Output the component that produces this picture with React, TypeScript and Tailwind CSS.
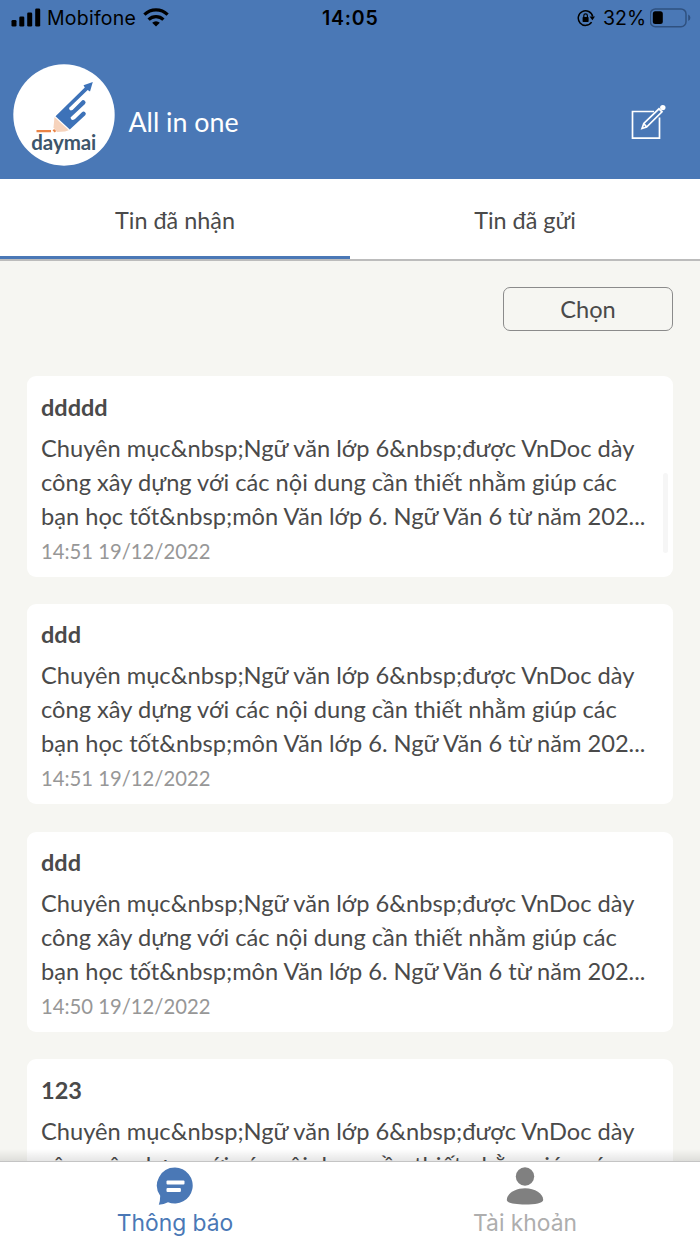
import React from "react";

const body = [
  "Chuyên mục&nbsp;Ngữ văn lớp 6&nbsp;được VnDoc dày",
  "công xây dựng với các nội dung cần thiết nhằm giúp các",
  "bạn học tốt&nbsp;môn Văn lớp 6. Ngữ Văn 6 từ năm 202...",
];

type Message = { title: string; lines: string[]; time?: string };

const messages: Message[] = [
  { title: "ddddd", lines: body, time: "14:51 19/12/2022" },
  { title: "ddd", lines: body, time: "14:51 19/12/2022" },
  { title: "ddd", lines: body, time: "14:50 19/12/2022" },
  { title: "123", lines: body.slice(0, 2) },
];

function StatusBar() {
  return (
    <div className="flex h-9 items-center pl-[11px] pr-[8px] font-['Inter',sans-serif] text-[19.5px] text-black">
      <svg className="-mt-[2px]" width="30" height="19" viewBox="0 0 30 19">
        <rect x="0.5" y="12" width="5" height="6.5" rx="1.3" />
        <rect x="8.3" y="8.5" width="5" height="10" rx="1.3" />
        <rect x="16.2" y="4.5" width="5" height="14" rx="1.3" />
        <rect x="24.2" y="0.5" width="5" height="18" rx="1.3" />
      </svg>
      <span className="ml-[6px] mt-[2px] w-[90px] whitespace-nowrap tracking-[0.25px]">Mobifone</span>
      <svg className="-mt-[2px] ml-[6px]" width="26" height="19" viewBox="0 0 26 19" fill="none" stroke="#000" strokeWidth="3.2">
        <path d="M1.400 6.700a16.600 16.600 0 0 1 23.200 0" />
        <path d="M5.600 11.600a10.600 10.600 0 0 1 14.800 0" />
        <path d="M13 18.500l-3.800-3.700a5.500 5.500 0 0 1 7.600 0z" fill="#000" stroke="none" />
      </svg>
      <span className="ml-[153px] mt-[2px] w-[58px] whitespace-nowrap font-semibold tracking-[0.8px]">14:05</span>
      <svg className="ml-auto" width="18" height="18" viewBox="0 0 18 18">
        <path d="M14.600 13.200A7.300 7.300 0 1 1 15.700 7.500" fill="none" stroke="#000" strokeWidth="1.5" />
        <path d="M12.600 7.400h5.400l-2.600 3.800z" />
        <rect x="5.600" y="8" width="6" height="5" rx="0.700" />
        <path d="M6.800 8.500V6.700a1.800 1.800 0 0 1 3.600 0v1.800" fill="none" stroke="#000" strokeWidth="1.200" />
      </svg>
      <span className="ml-[8px] mt-[2px] w-[43px] whitespace-nowrap">32%</span>
      <svg className="-mt-px ml-[4px]" width="42" height="20" viewBox="0 0 42 20">
        <rect x="0.400" y="0.900" width="35.600" height="17.800" rx="5" fill="none" stroke="#2f5180" strokeWidth="1.500" />
        <rect x="2.800" y="3.300" width="10" height="12.800" rx="2.500" />
        <path d="M38.200 6.500q2.200 1 2.200 3.300t-2.200 3.300z" fill="#2f5180" />
      </svg>
    </div>
  );
}

function Logo() {
  return (
    <svg width="102" height="102" viewBox="0 0 102 102">
      <circle cx="51" cy="51" r="50.700" fill="#fff" />
      <path d="M42.500 52.300 71.800 23.500 70.500 21.300 79.800 18 77 27.500 74.700 26 56 44Q56.300 47.500 59.500 46L68.500 37A2.100 2.100 0 0 1 72 40L57.500 53.500Q58 57.500 62 55L69 48.300A2.100 2.100 0 0 1 72.200 51.300L56.800 65.500z" fill="#3d72b8" />
      <path d="M41.500 53 55.800 66.300 52 67.500 44 68 40.500 63.500z" fill="#f6d3bc" />
      <path d="M23.500 67.200h14.500M40.300 65.800l2.200 2" stroke="#ea8446" strokeWidth="2.200" />
      <text x="18.300" y="85.500" fontFamily="Lato, sans-serif" fontWeight="700" fontSize="20.500" textLength="65" fill="#3d566b">daymai</text>
    </svg>
  );
}

function MessageCard({ title, lines, time }: Message) {
  return (
    <article className="h-[200.5px] shrink-0 rounded-[9px] bg-white px-[14px] pt-[13.5px] text-[#4a4a4a]">
      <h2 className="text-[23.5px] font-bold leading-[34px]">{title}</h2>
      <div className="mt-[7px] whitespace-nowrap text-[23.65px] leading-[34px]">
        {lines.map((line) => (
          <p key={line}>{line}</p>
        ))}
      </div>
      {time && <time className="block text-[20.25px] leading-[36px] text-[#979797]">{time}</time>}
    </article>
  );
}

export default function App() {
  return (
    <div className="flex h-[1244px] w-[700px] flex-col overflow-hidden bg-[#f6f6f2] font-['Lato','Noto_Sans',sans-serif]">
      <header className="h-[179px] shrink-0 bg-[#4a78b6]">
        <StatusBar />
        <div className="flex items-start pl-[13px] pr-[34px] pt-[28px]">
          <Logo />
          <h1 className="ml-[13.5px] mt-[41px] whitespace-nowrap text-[26.800px] leading-[34px] text-white">All in one</h1>
          <svg className="ml-auto mt-[40px]" width="36" height="36" viewBox="0 0 36 36" fill="none" stroke="#fff" strokeWidth="1.700">
            <path d="M24 7.500H2.500V34.200H29.500V13.500" />
            <path d="M12 24.500 13.800 19.500 29 4.800 32 7.800 16.600 23z M13.800 19.500l2.800 3.500" />
            <circle cx="32.800" cy="3.600" r="2.700" fill="#fff" stroke="none" />
          </svg>
        </div>
      </header>
      <nav className="grid h-[82px] shrink-0 grid-cols-2 border-b-2 border-[#bcbcbc] bg-white text-center text-[23.400px] text-[#4a4a4a]">
        <div className="border-b-[3px] border-[#4a78b6] pt-[24px] leading-[34px]">Tin đã nhận</div>
        <div className="pt-[24px] leading-[34px]">Tin đã gửi</div>
      </nav>
      <main className="relative flex min-h-0 flex-1 flex-col overflow-hidden px-[27px] pt-[26px]">
        <button className="h-[44px] w-[170px] shrink-0 self-end rounded-[7px] border border-[#8b8b8b] text-[23.600px] leading-[43px] text-[#4a4a4a]">Chọn</button>
        <div className="mt-[45.45px] flex flex-col gap-[27.05px]">
          {messages.map((m, i) => (
            <MessageCard key={i} {...m} />
          ))}
        </div>
        <div className="absolute right-[32px] top-[212px] h-[80px] w-[5px] rounded-full bg-[#f6f6f6]" />
        <div className="absolute inset-x-0 bottom-0 h-[12px] bg-linear-to-b from-transparent to-black/10" />
      </main>
      <footer className="grid h-[83px] shrink-0 grid-cols-2 border-t border-[#c4c4c4] bg-white font-['Inter',sans-serif] text-[22.800px] leading-[30px]">
        <div className="flex flex-col items-center pt-[5px] text-[#4a78b6]">
          <svg width="38" height="38" viewBox="0 0 38 38">
            <path d="M19 0.500a18 18 0 1 1-7 34.700Q8 37.500 2.800 37.800q1.400-3.400 1.400-9A18 18 0 0 1 19 .5z" fill="#4a78b6" />
            <rect x="10.500" y="13.600" width="18" height="4" rx="1" fill="#fff" />
            <rect x="10.500" y="21" width="14.400" height="4" rx="1" fill="#fff" />
          </svg>
          <span className="mt-[3px] whitespace-nowrap">Thông báo</span>
        </div>
        <div className="flex flex-col items-center pt-[5px] text-[#aeaeae]">
          <svg width="38" height="38" viewBox="0 0 38 38" fill="#808080">
            <circle cx="19" cy="9.500" r="9.200" />
            <path d="M19 21.300c10 0 18.200 5.400 18.200 11.600 0 3-8.200 4.600-18.200 4.600S.8 35.900.8 32.900C.8 26.700 9 21.300 19 21.300z" />
          </svg>
          <span className="mt-[3px] whitespace-nowrap">Tài khoản</span>
        </div>
      </footer>
    </div>
  );
}
